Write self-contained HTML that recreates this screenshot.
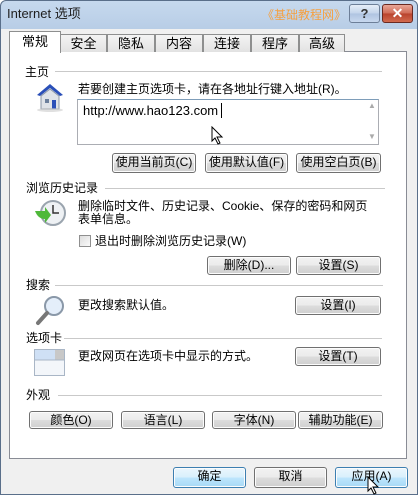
<!DOCTYPE html>
<html><head><meta charset="utf-8"><style>
*{margin:0;padding:0;box-sizing:border-box}
body{width:418px;height:495px;overflow:hidden;background:#fff;font-family:"Liberation Sans","Noto Sans CJK SC","WenQuanYi Zen Hei",sans-serif;font-size:12px;color:#000;position:relative}
.win{position:absolute;left:0;top:0;width:418px;height:495px;border:1px solid #5a6f8a;background:linear-gradient(#c6d9ee,#b8cde6 28px,#f0f0f0 28px);border-radius:6px 6px 0 0}
.a{position:absolute;white-space:nowrap;line-height:14px}
.btn{position:absolute;border:1px solid #707070;border-radius:3px;background:linear-gradient(#f2f2f2,#ebebeb 50%,#dddddd 50%,#cfcfcf);text-align:center;font-size:12px;line-height:17px;box-shadow:inset 0 0 0 1px #fcfcfc}
.tab{position:absolute;top:34px;height:18px;border:1px solid #8e8f8f;border-bottom:none;background:linear-gradient(#f4f4f4,#e2e2e2);text-align:center;line-height:17px;font-size:13px}
.line{position:absolute;height:1px;background:#c9c9c9}
.panel{position:absolute;left:9px;top:51px;width:398px;height:408px;background:#fff;border:1px solid #898c95}
</style></head><body>
<div class="win"></div>
<div class="a" style="left:7px;top:7px;font-size:13px;color:#1e1e1e">Internet 选项</div>
<div class="a" style="left:262px;top:8px;color:#f5a040;font-size:12px">《基础教程网》</div>
<div style="position:absolute;left:349px;top:4px;width:31px;height:19px;border:1px solid #6d7f98;border-radius:3px;background:linear-gradient(#e6eef8,#c2d3ea 50%,#aec3e0 50%,#c8d8ee);text-align:center;font-weight:bold;color:#333;line-height:17px;font-size:13px">?</div>
<div style="position:absolute;left:382px;top:4px;width:31px;height:19px;border:1px solid #6a2a22;border-radius:3px;background:linear-gradient(#e9a697,#cf6a55 50%,#b8412b 50%,#d26a4f);text-align:center;font-weight:bold;color:#fff;line-height:17px;font-size:14px">✕</div>
<div class="panel"></div>
<div class="tab" style="left:60px;width:47px">安全</div>
<div class="tab" style="left:107px;width:48px">隐私</div>
<div class="tab" style="left:155px;width:48px">内容</div>
<div class="tab" style="left:203px;width:48px">连接</div>
<div class="tab" style="left:251px;width:48px">程序</div>
<div class="tab" style="left:299px;width:46px">高级</div>
<div class="tab" style="left:9px;top:31px;width:52px;height:22px;background:#fff;line-height:20px;z-index:2">常规</div>

<div class="a" style="left:25px;top:65px">主页</div><div class="line" style="left:55px;top:71px;width:327px"></div>
<svg style="position:absolute;left:33px;top:81px" width="34" height="32" viewBox="0 0 34 32"><path d="M4 14 L17 3 L30 14 L27 15 L17 7 L7 15Z" fill="#2a4fb8"/><path d="M8 15 L17 8 L26 15 L26 28 L8 28Z" fill="#dfe3e8" stroke="#8a96a6"/><rect x="12" y="18" width="4" height="4" fill="#6b7f9c"/><rect x="19" y="19" width="4" height="9" fill="#2a4fb8"/><ellipse cx="17" cy="29" rx="13" ry="2" fill="#ccc" opacity=".6"/></svg>
<div class="a" style="left:78px;top:82px">若要创建主页选项卡，请在各地址行键入地址(R)。</div>
<div style="position:absolute;left:77px;top:99px;width:302px;height:46px;border:1px solid #abadb3;border-top-color:#7e9db9;background:#fff"></div>
<div class="a" style="left:83px;top:104px;font-size:13px">http://www.hao123.com</div>
<div style="position:absolute;left:368px;top:101px;color:#aaa;font-size:8px">▲</div><div style="position:absolute;left:368px;top:132px;color:#aaa;font-size:8px">▼</div>
<div class="btn" style="left:112px;top:153px;width:84px;height:20px">使用当前页(C)</div>
<div class="btn" style="left:205px;top:153px;width:83px;height:20px">使用默认值(F)</div>
<div class="btn" style="left:296px;top:153px;width:85px;height:20px">使用空白页(B)</div>

<div class="a" style="left:26px;top:181px">浏览历史记录</div><div class="line" style="left:105px;top:188px;width:280px"></div>
<svg style="position:absolute;left:33px;top:199px" width="34" height="30"><circle cx="20" cy="14" r="12" fill="#eef1f4" stroke="#9aa4ae" stroke-width="2"/><path d="M20 6 V14 H26" stroke="#333" stroke-width="1.5" fill="none"/><path d="M2 12 L12 12 L12 8 L18 16 L12 24 L12 20 C7 20 4 17 2 12Z" fill="#4fb83a"/></svg>
<div class="a" style="left:78px;top:199px">删除临时文件、历史记录、Cookie、保存的密码和网页</div>
<div class="a" style="left:78px;top:212px">表单信息。</div>
<div style="position:absolute;left:79px;top:235px;width:12px;height:12px;border:1px solid #8f8f8f;background:linear-gradient(135deg,#ddd,#fafafa)"></div>
<div class="a" style="left:95px;top:234px">退出时删除浏览历史记录(W)</div>
<div class="btn" style="left:207px;top:256px;width:84px;height:19px">删除(D)...</div>
<div class="btn" style="left:296px;top:256px;width:85px;height:19px">设置(S)</div>

<div class="a" style="left:26px;top:278px">搜索</div><div class="line" style="left:55px;top:285px;width:328px"></div>
<svg style="position:absolute;left:35px;top:295px" width="30" height="32"><circle cx="19" cy="11" r="9" fill="#e4eefa" stroke="#8a98a8" stroke-width="2"/><path d="M12 18 L3 28" stroke="#777" stroke-width="4" stroke-linecap="round"/></svg>
<div class="a" style="left:78px;top:298px">更改搜索默认值。</div>
<div class="btn" style="left:295px;top:296px;width:86px;height:19px">设置(I)</div>

<div class="a" style="left:26px;top:331px">选项卡</div><div class="line" style="left:64px;top:338px;width:318px"></div>
<svg style="position:absolute;left:34px;top:349px" width="32" height="28"><rect x="0.5" y="0.5" width="30" height="26" fill="#f3f6fa" stroke="#a9b6c6"/><rect x="1" y="1" width="20" height="10" fill="#cfe0f5"/><rect x="21" y="1" width="9" height="10" fill="#c8c8c8"/><line x1="1" y1="11" x2="30" y2="11" stroke="#a9b6c6"/></svg>
<div class="a" style="left:78px;top:349px">更改网页在选项卡中显示的方式。</div>
<div class="btn" style="left:295px;top:347px;width:86px;height:19px">设置(T)</div>

<div class="a" style="left:26px;top:388px">外观</div><div class="line" style="left:58px;top:395px;width:324px"></div>
<div class="btn" style="left:29px;top:411px;width:84px;height:18px">颜色(O)</div>
<div class="btn" style="left:121px;top:411px;width:84px;height:18px">语言(L)</div>
<div class="btn" style="left:212px;top:411px;width:84px;height:18px">字体(N)</div>
<div class="btn" style="left:298px;top:411px;width:85px;height:18px">辅助功能(E)</div>

<div class="btn" style="left:173px;top:467px;width:73px;height:21px;border-color:#3c7fb1;background:linear-gradient(#eaf6fd,#d9f0fc 50%,#bee6fd 50%,#a7d9f5)">确定</div>
<div class="btn" style="left:254px;top:467px;width:73px;height:21px">取消</div>
<div class="btn" style="left:335px;top:467px;width:73px;height:21px;border-color:#3c7fb1;background:linear-gradient(#eaf6fd,#d9f0fc 50%,#bee6fd 50%,#a7d9f5)">应用(A)</div>
<svg style="position:absolute;left:367px;top:476px" width="14" height="19"><path d="M1 1 L1 15 L4 12 L7 18 L9 17 L6 11 L11 11Z" fill="#fff" stroke="#000"/></svg>
<svg style="position:absolute;left:211px;top:126px" width="14" height="19"><path d="M1 1 L1 15 L4 12 L7 18 L9 17 L6 11 L11 11Z" fill="#fff" stroke="#000"/></svg>
<div style="position:absolute;left:221px;top:103px;width:1px;height:15px;background:#000"></div>
</body></html>
